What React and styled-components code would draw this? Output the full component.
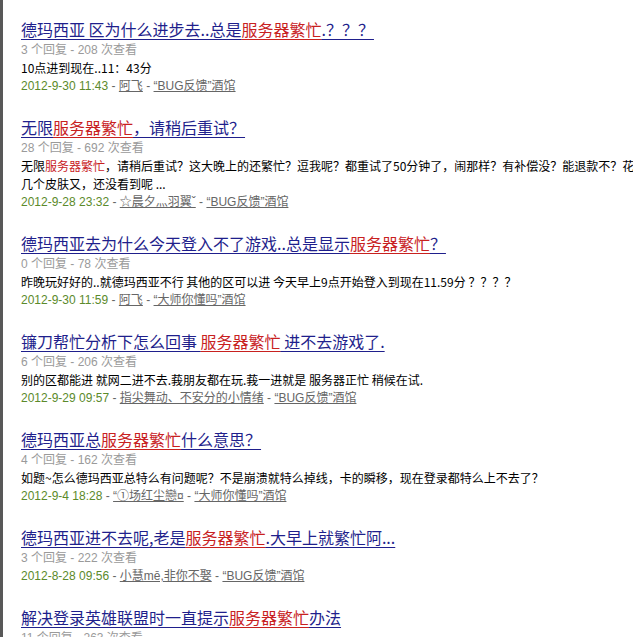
import React from "react";
import styled, { createGlobalStyle } from "styled-components";

const GlobalStyle = createGlobalStyle`
    html, body {
        margin: 0;
        padding: 0;
        background: #ffffff;
        overflow: hidden;
    }
    body {
        font-family: "Liberation Sans", "Noto Sans CJK SC", sans-serif;
    }
`;

const posts = [
    {
        title: ["德玛西亚 区为什么进步去..总是", "服务器繁忙", ".？？？"],
        replies: 3,
        views: 208,
        excerpt: ["10点进到现在..11：43分"],
        date: "2012-9-30 11:43",
        author: "阿飞",
        board: "“BUG反馈”酒馆",
    },
    {
        title: ["无限", "服务器繁忙", "，请稍后重试？"],
        replies: 28,
        views: 692,
        excerpt: [
            "无限",
            "服务器繁忙",
            "，请稍后重试？这大晚上的还繁忙？逗我呢？都重试了50分钟了，闹那样？有补偿没？能退款不？花几个皮肤又，还没看到呢 ...",
        ],
        date: "2012-9-28 23:32",
        author: "☆晨夕灬羽翼ˇ",
        board: "“BUG反馈”酒馆",
    },
    {
        title: ["德玛西亚去为什么今天登入不了游戏..总是显示", "服务器繁忙", "？"],
        replies: 0,
        views: 78,
        excerpt: ["昨晚玩好好的..就德玛西亚不行 其他的区可以进 今天早上9点开始登入到现在11.59分 ？？？？"],
        date: "2012-9-30 11:59",
        author: "阿飞",
        board: "“大师你懂吗”酒馆",
    },
    {
        title: ["镰刀帮忙分析下怎么回事 ", "服务器繁忙", " 进不去游戏了."],
        replies: 6,
        views: 206,
        excerpt: ["别的区都能进 就网二进不去.莪朋友都在玩.莪一进就是 服务器正忙 稍候在试."],
        date: "2012-9-29 09:57",
        author: "指尖舞动、不安分的小情绪",
        board: "“BUG反馈”酒馆",
    },
    {
        title: ["德玛西亚总", "服务器繁忙", "什么意思？"],
        replies: 4,
        views: 162,
        excerpt: ["如题~怎么德玛西亚总特么有问题呢？不是崩溃就特么掉线，卡的瞬移，现在登录都特么上不去了？"],
        date: "2012-9-4 18:28",
        author: "“①场红尘戀¤",
        board: "“大师你懂吗”酒馆",
    },
    {
        title: ["德玛西亚进不去呢,老是", "服务器繁忙", ".大早上就繁忙阿..."],
        replies: 3,
        views: 222,
        excerpt: null,
        date: "2012-8-28 09:56",
        author: "小慧mē,非你不娶",
        board: "“BUG反馈”酒馆",
    },
    {
        title: ["解决登录英雄联盟时一直提示", "服务器繁忙", "办法"],
        replies: 11,
        views: 263,
        excerpt: null,
        date: "2012-8-27 10:12",
        author: "阿飞",
        board: "“BUG反馈”酒馆",
    },
];

// odd parts are the highlighted keyword
function Marked({ parts, underline }) {
    return parts.map((part, i) =>
        i % 2 === 1 ? (
            <Hot key={i} $underline={underline}>
                {part}
            </Hot>
        ) : (
            <React.Fragment key={i}>{part}</React.Fragment>
        )
    );
}

function Post({ post }) {
    return (
        <Item>
            <Title href="#">
                <Marked parts={post.title} underline />
            </Title>
            <Meta>
                {post.replies} 个回复 - {post.views} 次查看
            </Meta>
            {post.excerpt && (
                <Excerpt>
                    <Marked parts={post.excerpt} />
                </Excerpt>
            )}
            <Byline>
                <DateText>{post.date}</DateText>
                <Sep> - </Sep>
                <UserLink href="#">{post.author}</UserLink>
                <Sep> - </Sep>
                <UserLink href="#">{post.board}</UserLink>
            </Byline>
        </Item>
    );
}

export default function App() {
    return (
        <>
            <GlobalStyle />
            <Page>
                <List>
                    {posts.map((post, i) => (
                        <Post key={i} post={post} />
                    ))}
                </List>
            </Page>
        </>
    );
}

const Page = styled.div`
    min-height: 100vh;
    border-left: 3px solid #585858;
    box-sizing: border-box;
`;

const List = styled.ul`
    list-style: none;
    margin: 0;
    padding: 17px 0 0 18px;
    width: 618px;
`;

const Item = styled.li`
    display: flex;
    flex-direction: column;
    align-items: flex-start;
    margin-bottom: 20px;
`;

const Title = styled.a`
    font-family: "Noto Sans CJK SC", "Liberation Sans", sans-serif;
    font-size: 16px;
    line-height: 24px;
    color: #1f1f8c;
    text-decoration: underline;
    text-underline-offset: 3px;
`;

const Hot = styled.span`
    color: #c8211f;
    text-decoration: ${(p) => (p.$underline ? "underline" : "none")};
    text-underline-offset: 3px;
`;

const Meta = styled.div`
    font-size: 12px;
    line-height: 18px;
    color: #9a9a9a;
`;

const Excerpt = styled.div`
    font-family: "Noto Sans CJK SC", "Liberation Sans", sans-serif;
    font-size: 12px;
    line-height: 18px;
    color: #000000;
`;

const Byline = styled.div`
    font-size: 12px;
    line-height: 18px;
    color: #666666;
`;

const DateText = styled.span`
    color: #5b8a2b;
`;

const Sep = styled.span`
    color: #666666;
`;

const UserLink = styled.a`
    color: #666666;
    text-decoration: underline;
`;
